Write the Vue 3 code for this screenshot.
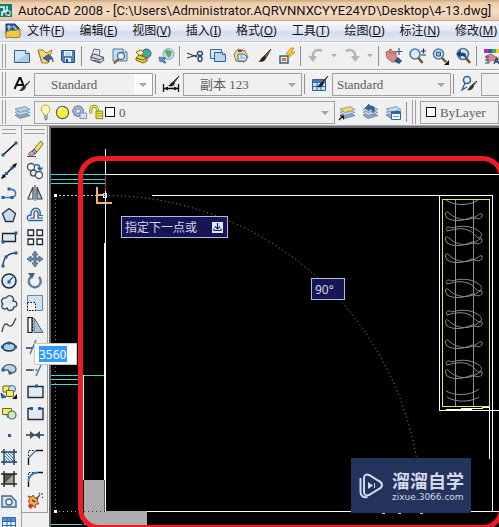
<script setup>
import { ref } from 'vue'

const menus = [
  ['文件', 'F'], ['编辑', 'E'], ['视图', 'V'], ['插入', 'I'], ['格式', 'O'],
  ['工具', 'T'], ['绘图', 'D'], ['标注', 'N'], ['修改', 'M'],
]

const distance = ref('3560')

const layers = (top) =>
  '<path d="M2 12l5 3.500 10-3-5-2z" fill="#8fa9c6" stroke="#58718f" stroke-width=".7"/>' +
  '<path d="M2 9l5 3.500 10-3-5-2z" fill="#c3d6e8" stroke="#6a86a8" stroke-width=".7"/>' +
  `<path d="M2 6l5 3.500 10-3-5-3z" fill="${top}" stroke="#5f83ad" stroke-width=".7"/>`
const brush = '<path d="M16 2l-7 7 2 2z" fill="#8a5a2c" stroke="#3a2a1c" stroke-width=".8"/><path d="M9.500 9c-3 0-3 4-6 5.500 4 1 7-.5 7.500-3.500z" fill="#222"/>'
const dot = (x, y) => `<rect x="${x - 1.5}" y="${y - 1.5}" width="3" height="3" fill="#1f5f9e"/>`

const standard = [
  { name: '新建', art: '<path d="M1.500 3.500h11l4 3v9h-15z" fill="#cfe4f6" stroke="#2d5f8e"/><path d="M12.500 3.500v3h4" fill="#fff" stroke="#2d5f8e"/><path d="M2 15L14 7h2v8z" fill="#a9cbe8"/>' },
  { name: '打开', art: '<path d="M2 3h5l3 3 6-3-4 13H6z" fill="#f4d98b" stroke="#a07a28"/><path d="M2 3l4 13" stroke="#a07a28"/><path d="M13 7l-6 4 6 4v-3h3l1 3c0-4-1-6-4-6z" fill="#49659c" stroke="#26375c" stroke-width=".6"/>' },
  { name: '保存', art: '<path d="M2.500 3.500h13v12h-11l-2-2z" fill="#4c86bd" stroke="#244f80"/><path d="M5 4h8v5H5z" fill="#e8f2fb"/><path d="M6 6h6M6 8h6" stroke="#8db2d3" stroke-width=".8"/><path d="M6 11h6v4H6z" fill="#dce8f2"/><path d="M7 12h2v3H7z" fill="#244f80"/>' },
  { sep: 1 },
  { name: '打印', art: '<path d="M6 2l6 1-1 6-7-1z" fill="#fff" stroke="#555b77"/><path d="M3 9l3-2 9 3 1 3-4 3-9-3z" fill="#d3d6e4" stroke="#4d5270"/><path d="M3 10l9 3 4-3M6 13l6 2" fill="none" stroke="#4d5270"/><path d="M7 4l3 .6M6.500 6l3 .5" stroke="#8b91b0" stroke-width=".7"/>' },
  { name: '打印预览', art: '<path d="M2 2h10l4 3v9H2z" fill="#c4dcf0" stroke="#557fa8"/><path d="M12 2v3h4" fill="#fff" stroke="#557fa8"/><circle cx="10" cy="9" r="3.500" fill="#e9f5fd" stroke="#456a92" stroke-width="1.300"/><path d="M7.500 12L3 16.500" stroke="#8b5a34" stroke-width="2.200"/>' },
  { name: '发布', art: '<circle cx="12.500" cy="6.500" r="4.500" fill="#3f9fd6" stroke="#1f5f95"/><path d="M10 3c2 2 4 1 5 5l-2 3c0-3-3-3-3-8z" fill="#56b05c"/><path d="M2 5l5-2 3 3-4 3z" fill="#fff6a0" stroke="#8a7415"/><path d="M2 11l3-3 8 3v3l-4 2-7-3z" fill="#e8d33a" stroke="#735f10"/><path d="M2 11l7 2 4-2" fill="none" stroke="#735f10"/>' },
  { name: '三维 DWF', art: '<circle cx="11.500" cy="7" r="5.500" fill="#bfdce9" stroke="#83a3b6"/><path d="M8 4c3-3 4 0 7 0-1 4-1 6-4 7 0-3-3-3-3-7z" fill="#5daa63"/><path d="M2 10l7 1-2 2 2 3H7l-2-2-2 1z" fill="#5c8fc2" stroke="#315d8e" stroke-width=".7"/>' },
  { sep: 1 },
  { name: '剪切', art: '<path d="M1 6l10 4M1 11l10-3" stroke="#2d3c50" stroke-width="1.300"/><ellipse cx="14" cy="6.500" rx="2.500" ry="2" fill="none" stroke="#2b4a78" stroke-width="1.400"/><ellipse cx="14" cy="12" rx="2" ry="2.500" fill="none" stroke="#2b4a78" stroke-width="1.400"/>' },
  { name: '复制', art: '<path d="M1.500 2.500h11v9h-11z" fill="#d6e8f6" stroke="#3a6a98"/><path d="M5.500 5.500h8l3 2v7h-11z" fill="#b9d8f0" stroke="#2d5f8e"/><path d="M13.500 5.500v2h3" fill="#fff" stroke="#2d5f8e"/>' },
  { name: '粘贴', art: '<path d="M6 2L2 7l2 7 8 1 4-5-3-6z" fill="#f1d891" stroke="#9b7a33"/><path d="M6 4h4" stroke="#555" stroke-width="2"/><path d="M6 7h6l3 3-1 4H6z" fill="#d7e9f6" stroke="#3f6d9a"/><path d="M8 9h3M8 11h5" stroke="#7197bb" stroke-width=".8"/>' },
  { name: '特性匹配', art: brush },
  { name: '块编辑器', art: '<path d="M2 9h8v7H2z" fill="#f1e4cb" stroke="#315f94" stroke-width="1.500"/><path d="M4 11h4v3H4z" fill="#e57a2c"/><path d="M13 1L8 7h4l-3 5 8-7h-4l3-4z" fill="#ffd52e" stroke="#bb8510" stroke-width=".8"/>' },
  { sep: 1 },
  { name: '放弃', art: '<path d="M15 4c-6-3-10 1-9 7" fill="none" stroke="#b5b5b5" stroke-width="2.500"/><path d="M1 9h9l-4 6z" fill="#b5b5b5"/>' },
  { name: '放弃列表', narrow: 1, art: '<path d="M6 7h6l-3 3.500z" fill="#b0b0b0"/>' },
  { name: '重做', art: '<path d="M3 4c6-3 10 1 9 7" fill="none" stroke="#b5b5b5" stroke-width="2.500"/><path d="M8 9h9l-5 6z" fill="#b5b5b5"/>' },
  { name: '重做列表', narrow: 1, art: '<path d="M6 7h6l-3 3.500z" fill="#b0b0b0"/>' },
  { sep: 1 },
  { name: '实时平移', art: '<path d="M1 5l2-1 3 3-2-4 2-1 3 5V4l2 1v5l2 1-2 4-4 0-5-4z" fill="#dc8c84" stroke="#93504c" stroke-width=".8"/><path d="M9 14l4-4 4 4-3 3z" fill="#34517f"/><path d="M14 1v7M10.500 4.500h7" stroke="#3b5d8d" stroke-width="1.200"/>' },
  { name: '实时缩放', art: '<circle cx="7" cy="7" r="5" fill="#d8ecfa" stroke="#4d78a8" stroke-width="1.600"/><path d="M10.500 11l4 5" stroke="#7b4e2d" stroke-width="2.600"/><path d="M13 4h5M15.500 1.500v5M13 8h5" stroke="#1d3356" stroke-width="1.200"/>' },
  { name: '窗口缩放', art: '<circle cx="7.500" cy="7" r="5" fill="#d8ecfa" stroke="#4d78a8" stroke-width="1.600"/><path d="M5.500 5h4v4h-4z" fill="#8eb7dc" stroke="#244f80"/><path d="M11 11l4 4" stroke="#7b4e2d" stroke-width="2.400"/><path d="M18 13v5h-5z" fill="#111"/>' },
  { name: '缩放上一个', art: '<circle cx="9" cy="7" r="5.500" fill="#cde2f4" stroke="#4d78a8" stroke-width="1.600"/><path d="M2 7l5-4v3c5-1 6 2 5 6-1-3-3-3-5-3v2z" fill="#1f4679"/><path d="M12 11l4 5" stroke="#7b4e2d" stroke-width="2.600"/>' },
  { sep: 1 },
  { name: '特性', art: '<path d="M1 2h4v4H1z" fill="#b331b5"/><path d="M5 2h4v4H5z" fill="#3552c5"/><path d="M9 2h4v4H9z" fill="#35b058"/><path d="M13 2h4v4h-4z" fill="#e8ce2e"/><path d="M3 9l5-2 8 5-3 3-4-2-4 3z" fill="#dc8c84" stroke="#93504c" stroke-width=".8"/><path d="M2 10h4M2 13h4M2 16h4" stroke="#28477a"/><path d="M11 17l2.500-6 2.500 6M12 15h3" stroke="#28477a" fill="none" stroke-width="1.300"/>' },
]

const styleBars = [
  { name: '文字样式', value: 'Standard', kind: 'indent lit', art: '<path d="M1.500 14L6.500 3h1l4 10M4 10h6" fill="none" stroke="#111" stroke-width="2"/><path d="M17 6l-6 5 1 1z" fill="#8a5a2c" stroke="#5a3a1c"/><path d="M11 11c-2 0-3 4-5 5 4 .5 6-1 7-4z" fill="#333"/>' },
  { name: '标注样式', value: '副本 123', kind: 'indent', art: '<path d="M1.500 9v8M16.500 9v8M2 13.500h14" stroke="#111" stroke-width="1.300"/><path d="M2 13.500l4-2v4zM16 13.500l-4-2v4z" fill="#111"/><path d="M17 1l-6 6 1 1z" fill="#8a5a2c" stroke="#4a3018"/><path d="M11 7c-2 0-3 3-5 4 4 1 6 0 7-3z" fill="#222"/>' },
  { name: '表格样式', value: 'Standard', kind: '', art: '<path d="M1.500 4.500h13v11h-13z" fill="#cfe2f6" stroke="#2b5fa8"/><path d="M2 5h12v3H2z" fill="#3f76c2"/><path d="M2 11.500h12M6 8v8M10 8v8" stroke="#2b5fa8"/><path d="M17 1l-6 6 1 1z" fill="#8a5a2c" stroke="#4a3018"/><path d="M11 7c-2 0-3 4-5 5 4 1 6-1 7-4z" fill="#222"/>' },
  { name: '多重引线样式', value: '', kind: '', art: '<circle cx="7" cy="5" r="3.500" fill="#e5f2fb" stroke="#2b5f9e" stroke-width="1.500"/><path d="M5 8l-3 7 5-3" fill="none" stroke="#2b5f9e" stroke-width="1.300"/><path d="M17 6l-5 4 1 1z" fill="#8a5a2c" stroke="#4a3018"/><path d="M12 10c-2 0-3 4-5 5 4 1 6-1 7-4z" fill="#333"/>' },
]

const layerState = [
  '<path d="M7 12c0-3-3-3-3-7a5 5 0 0 1 10 0c0 4-3 4-3 7z" transform="translate(1 1) scale(.9)" fill="#fffbb0" stroke="#a89a2c"/><path d="M7.500 13h4M7.500 15h4M8.500 16.500h2" stroke="#6f7480" stroke-width="1.200"/>',
  '<circle cx="9" cy="9" r="6.500" fill="#ffec35" stroke="#4c5c62" stroke-width="1.200"/><path d="M5 7a5 5 0 0 1 5-3" stroke="#fffbc0" stroke-width="2" fill="none"/>',
  '<circle cx="7.500" cy="7.500" r="5.500" fill="#a9bdd3" stroke="#6685a8" stroke-width="1.300"/><circle cx="7.500" cy="7.500" r="2.500" fill="#dce8f2" stroke="#6685a8"/><path d="M9.500 9.500h7v6h-7z" fill="#d7e0ec" stroke="#7c91ae"/>',
  '<path d="M3 10V6a3.500 3.500 0 0 1 7 0v5" fill="none" stroke="#8a8c22" stroke-width="3.200"/><path d="M3 9.500V6a3.500 3.500 0 0 1 7 0v5" fill="none" stroke="#f1ee52" stroke-width="1.500"/><path d="M8.500 7.500h7v8h-7z" fill="#eee740" stroke="#85831c"/><path d="M9 10h6M9 12.500h6" stroke="#a9a428"/>',
]

const layerTools = [
  { name: '置为当前', art: layers('#f4df4a') + '<path d="M1 17l4-4M2 13h3.500v3.500" stroke="#111" fill="none" stroke-width="1.200"/>' },
  { name: '上一个图层', art: layers('#c3d9ee') + '<path d="M4 5l4-4v2c5-1 7 3 4 7 0-3-2-4-4-4v2z" fill="#34659e" stroke="#1f4679" stroke-width=".6"/>' },
  { name: '图层状态', art: layers('#c3d9ee') + '<path d="M7.500 8.500h9v8h-9z" fill="#f4f9fe" stroke="#2c64a4"/><path d="M7 8h10v3H7z" fill="#2c64a4"/><path d="M9 13.500h6" stroke="#6ea0d0"/>' },
]

const draw = [
  { name: '直线', art: `<path d="M3 15L16 3" stroke="#111" stroke-width="1.500"/>${dot(3, 15)}${dot(16, 3)}` },
  { name: '构造线', art: `<path d="M2 16L16 2" stroke="#111" stroke-width="1.400"/><path d="M1 17l2-5 3 3zM17 1l-5 2 3 3z" fill="#111"/>${dot(6.5, 11.5)}${dot(12, 6)}` },
  { name: '多段线', art: `<path d="M3 13.500h9c6-1 4-9-2-8" fill="none" stroke="#3a76b4" stroke-width="1.600"/>${dot(3, 13.5)}${dot(12, 13.5)}${dot(9, 5)}` },
  { name: '正多边形', art: '<path d="M9 2.500l6.500 5-2.500 8H5.500l-3-8z" fill="#c8dced" stroke="#26323f" stroke-width="1.300"/>' },
  { name: '矩形', art: `<path d="M2.500 5.500h13v8h-13z" fill="#d7e9f7" stroke="#222" stroke-width="1.300"/>${dot(16, 5)}${dot(3, 14)}` },
  { name: '圆弧', art: `<path d="M3 16C3 8 8 3 16 3" fill="none" stroke="#223e5c" stroke-width="1.400"/>${dot(3, 16)}${dot(6, 7)}${dot(16, 3)}` },
  { name: '圆', art: `<circle cx="9" cy="9" r="7" fill="#d9eaf7" stroke="#1d2a38" stroke-width="1.500"/><path d="M9 9l4-4" stroke="#1f5f9e" stroke-width="1.300"/>${dot(9, 10)}` },
  { name: '修订云线', art: '<path d="M6 4c3-5 9-1 7 3 5 0 5 6 1 6-1 4-6 5-7 1-4 3-7-2-4-4-3-2-1-7 3-6z" fill="#e2ebf2" stroke="#3c4651" stroke-width="1.300"/>' },
  { name: '样条曲线', art: '<path d="M2 16c1-6 3-10 6-7s5 0 8-7" fill="none" stroke="#3c4651" stroke-width="1.300"/>' },
  { name: '椭圆', art: `<ellipse cx="9" cy="9" rx="6.500" ry="4" fill="#a9d1ec" stroke="#222e3c" stroke-width="1.300"/>${dot(2.5, 9)}${dot(15.5, 9)}${dot(9, 5)}` },
  { name: '椭圆弧', art: `<path d="M3 10c-1-7 13-7 13-1 0 3-3 4-6 4l-2-3z" fill="#b8d8ee" stroke="#53616e" stroke-width="1.400"/>${dot(3, 10)}${dot(10, 13)}` },
  { name: '插入块', art: '<path d="M3 4h8v6H3z" fill="#f4ed65" stroke="#6a6817"/><circle cx="12" cy="7" r="3.500" fill="#cbe0f0" stroke="#3b6d9b"/><path d="M6.500 8.500h7v6h-7z" fill="#f4ed65" stroke="#6a6817"/><path d="M1 11l5 4-4 1z" fill="#2f73b3" stroke="#1c4a77"/><path d="M17 12v5h-5z" fill="#111"/>' },
  { name: '创建块', art: '<path d="M2.500 4.500h9v6h-9z" fill="#f4ed65" stroke="#6a6817"/><circle cx="12" cy="11" r="4" fill="#d4e8a0" stroke="#3b6d9b" stroke-width="1.200"/><path d="M6 10l2 4" stroke="#2f73b3"/>' },
  { name: '点', art: dot(9.5, 9.5) },
  { name: '图案填充', art: '<path d="M4.500 4.500h9v9h-9z" fill="#e2eff8"/><path d="M5 8l5 5M5 5l8 8M8 5l5 5M11 5l2 2M5 11l2 2" stroke="#2f73b3"/><path d="M1 4h16M1 14h16M4 1v16M14 1v16" stroke="#1d3d5f" stroke-width="1.400"/>' },
  { name: '渐变色', art: '<path d="M4 4h10v10H4z" fill="#55594d"/><path d="M14 4v10H4z" fill="#a6a790"/><path d="M1 4h16M1 14h16M4 1v16M14 1v16" stroke="#20262c" stroke-width="1.400"/>' },
  { name: '面域', art: '<path d="M2 4h9l5 5v6H2z" fill="#cfe4f5" stroke="#42678b" stroke-width="1.400"/><circle cx="9" cy="10" r="3" fill="#fff" stroke="#42678b" stroke-width="1.400"/>' },
  { name: '表格', art: '<path d="M2.500 3.500h13v12h-13z" fill="#eaf4fd" stroke="#3267b8"/><path d="M3 4h12v3H3z" fill="#5a8ed8"/><path d="M3 7.500h12M3 11.500h12M7 4v11M11 4v11" stroke="#3267b8"/>' },
]

const modify = [
  { name: '删除', art: '<path d="M15 1L8 9l3 3 6-8z" fill="#f3df5c" stroke="#7a6a20"/><path d="M8 9l-2 2 3 3 2-2z" fill="#98aac0" stroke="#44566e"/><path d="M6 11l-3 2c-1 3 2 4 4 2l2-1z" fill="#e3a29a" stroke="#8b5850"/><path d="M1 16.500h9" stroke="#555"/>' },
  { name: '复制对象', art: '<circle cx="5" cy="5" r="3.500" fill="#fff" stroke="#41505f" stroke-width="1.300"/><circle cx="7.500" cy="11" r="3" fill="#e5eef6" stroke="#41505f" stroke-width="1.300"/><circle cx="13" cy="13" r="3.500" fill="#fff" stroke="#41505f" stroke-width="1.300"/><path d="M9 3c3-1 5 0 5 4M11.500 5.500L14 8l2.500-2.500" fill="none" stroke="#2463a1" stroke-width="1.500"/>' },
  { name: '镜像', art: '<path d="M7 3v12H2z" fill="#fff" stroke="#334150" stroke-width="1.200"/><path d="M11 3v12h5z" fill="#abc5da" stroke="#334150" stroke-width="1.200"/><path d="M9 1v16" stroke="#334150"/>' },
  { name: '偏移', art: '<path d="M2 14.500h14M2 14c-2-4 1-5 3-5-1-9 11-9 9 0" fill="none" stroke="#2469aa" stroke-width="1.400"/><path d="M4 12h4V7c0-3 4-3 4 0v5h5" fill="none" stroke="#39495a" stroke-width="1.200"/><path d="M17 9.500h-4M17 14.500h-4" stroke="#2469aa" stroke-width="1.200"/>' },
  { name: '阵列', art: '<g fill="#fff" stroke="#202830" stroke-width="1.300"><path d="M2 2h5.500v5.500H2zM11 2h5.500v5.500H11zM2 11h5.500v5.500H2zM11 11h5.500v5.500H11z"/></g>' },
  { name: '移动', art: '<path d="M9 1l3 4h-2v3h3V6l4 3-4 3v-2h-3v3h2l-3 4-3-4h2v-3H5v2L1 9l4-3v2h3V5H6z" fill="#6a8cad" stroke="#35536f" stroke-width=".7"/>' },
  { name: '旋转', art: '<path d="M6 4a6 6 0 1 0 7 1" fill="none" stroke="#607f9e" stroke-width="2.500"/><path d="M2 1h7L6 7z" fill="#426381"/>' },
  { name: '缩放', art: '<path d="M1.500 1.500h15v15h-15z" fill="#cfe2f1" stroke="#6984a0"/><path d="M1.500 8.500h8v8h-8z" fill="#f7fafc" stroke="#111" stroke-dasharray="1.500 1.500"/>' },
  { name: '拉伸', art: '<path d="M2 1.500h4v15H2z" fill="#fff" stroke="#111" stroke-width="1.200"/><path d="M6.500 1.500v15" stroke="#111" stroke-dasharray="1.500 1.500"/><path d="M8 2l9 14.500H8z" fill="#a8c3db" stroke="#4b6785"/>' },
  { name: '修剪', art: '<path d="M0 10h7" stroke="#111" stroke-width="1.300"/><path d="M4 16L10 2" stroke="#3a78b7" stroke-width="1.400"/><path d="M10 10h6" stroke="#111" stroke-dasharray="2 2"/>' },
  { name: '延伸', art: '<path d="M0 10h6" stroke="#111" stroke-width="1.300"/><path d="M6 10h7" stroke="#111" stroke-dasharray="2 1.500"/><path d="M10 16L16 3" stroke="#3a78b7" stroke-width="1.400"/>' },
  { name: '打断于点', art: `<path d="M2 4.500h15v11H2z" fill="#e0e9f4" stroke="#222c38" stroke-width="1.400"/>${dot(10.5, 4)}` },
  { name: '打断', art: `<path d="M5 4.500H2v11h15v-11h-3" fill="#e0e9f4" stroke="#222c38" stroke-width="1.400"/>${dot(5.5, 4.5)}${dot(13.5, 4.5)}` },
  { name: '合并', art: '<path d="M0 9h18" stroke="#1f2830" stroke-width="1.400"/><path d="M4 5l5 4-5 4zM14 5L9 9l5 4z" fill="#3d5263"/>' },
  { name: '倒角', art: '<path d="M2.500 8V2.500H9" fill="none" stroke="#111" stroke-dasharray="1.500 1.500"/><path d="M2.500 17V10M10 2.500h7" stroke="#111" stroke-width="1.400"/><path d="M2.500 10L10 2.500" stroke="#3a78b7" stroke-width="1.500"/>' },
  { name: '圆角', art: '<path d="M2.500 8V2.500H9" fill="none" stroke="#111" stroke-dasharray="1.500 1.500"/><path d="M2.500 17v-5M12 2.500h5" stroke="#111" stroke-width="1.400"/><path d="M2.500 12q0-9 9.500-9.500" fill="none" stroke="#3a78b7" stroke-width="1.800"/>' },
  { name: '分解', art: '<path d="M2 4l4 1 1-2 2 3 3 0-1 3 2 3-3 0-1 4-2-3-4 2 1-4-2-2 2-2z" fill="#f4b04a" stroke="#b3401e"/><path d="M2 13l4-1 1 3-3 2z" fill="#cf3030"/><path d="M10 7l4-4M13 1l1 1M16 1v2M16 5l1 1" stroke="#44536c" stroke-width="1.300"/><path d="M6 8l3 2" stroke="#2f2f2f" stroke-width="1.500"/>' },
]

const cupCoils = [218, 243, 260, 295, 326, 346, 376]
const humpCoils = [231, 284, 315, 365]
</script>

<template>
  <div class="app">
    <header class="title-bar">
      <svg class="app-logo" width="13" height="14" viewBox="0 0 13 14">
        <path d="M0 0h12v13H0z" fill="#157a72" />
        <path d="M0 3h4v4h3V2M2 12V8h3M9 7v5" fill="none" stroke="#e7fffb" stroke-width="1.500" />
        <path d="M6 7h4v4H6z" fill="#124c52" stroke="#fff" />
      </svg>
      <span>AutoCAD 2008 - [C:\Users\Administrator.AQRVNNXCYYE24YD\Desktop\4-13.dwg]</span>
    </header>

    <nav class="menu-bar">
      <svg class="doc-logo" width="16" height="16" viewBox="0 0 16 16">
        <path d="M1 1h9l4 4v6H1z" fill="#2d5c93" stroke="#1c3c66" />
        <path d="M4 2v5M2 4h5M8 3l4 4" stroke="#c9e3fa" stroke-width="1.200" />
        <path d="M1 9c5-3 7 0 14-3v8c-6 2-9-1-14 1z" fill="#f2c844" stroke="#a57d19" />
      </svg>
      <button v-for="[label, key] in menus" :key="key" class="menu-item">{{ label }}(<u>{{ key }}</u>)</button>
    </nav>

    <div class="toolbar standard">
      <i class="grip"></i>
      <template v-for="(t, i) in standard" :key="i">
        <i v-if="t.sep" class="sep"></i>
        <button v-else class="tool" :class="{ narrow: t.narrow }" :aria-label="t.name">
          <svg width="18" height="18" viewBox="0 0 18 18" fill="none" v-html="t.art"></svg>
        </button>
      </template>
    </div>

    <div class="toolbar">
      <i class="grip"></i>
      <template v-for="(s, i) in styleBars" :key="i">
        <i v-if="i" class="sep"></i>
        <button class="tool wide" :aria-label="s.name">
          <svg width="18" height="18" viewBox="0 0 18 18" fill="none" v-html="s.art"></svg>
        </button>
        <div class="combo style-combo" :class="s.kind">
          <select :aria-label="s.name"><option>{{ s.value }}</option></select>
          <svg class="arrow" width="18" height="20" viewBox="0 0 18 20"><path d="M5 9h8l-4 4z" fill="#a3a3a3" /></svg>
        </div>
      </template>
    </div>

    <div class="toolbar">
      <i class="grip"></i>
      <button class="tool wide" aria-label="图层特性管理器">
        <svg width="18" height="18" viewBox="0 0 18 18" v-html="layers('#b5cfe8')"></svg>
      </button>
      <div class="combo layer-combo">
        <svg v-for="(a, i) in layerState" :key="i" width="17" height="17" viewBox="0 0 18 18" fill="none" v-html="a"></svg>
        <b class="swatch"></b>
        <select aria-label="图层"><option>0</option></select>
        <svg class="arrow" width="18" height="20" viewBox="0 0 18 20"><path d="M5 9h8l-4 4z" fill="#a3a3a3" /></svg>
      </div>
      <button v-for="t in layerTools" :key="t.name" class="tool" :aria-label="t.name">
        <svg width="18" height="18" viewBox="0 0 18 18" fill="none" v-html="t.art"></svg>
      </button>
      <i class="sep"></i>
      <i class="grip"></i>
      <div class="combo color-combo">
        <b class="swatch"></b>
        <select aria-label="颜色"><option>ByLayer</option></select>
      </div>
    </div>

    <main class="workspace">
      <aside class="palette draw">
        <i class="grip-h"></i>
        <button v-for="t in draw" :key="t.name" :aria-label="t.name">
          <svg width="18" height="18" viewBox="0 0 18 18" fill="none" v-html="t.art"></svg>
        </button>
      </aside>
      <aside class="palette modify">
        <i class="grip-h"></i>
        <button v-for="t in modify" :key="t.name" :aria-label="t.name">
          <svg width="18" height="18" viewBox="0 0 18 18" fill="none" v-html="t.art"></svg>
        </button>
      </aside>

      <section class="canvas">
        <svg class="drawing" fill="none">
          <g transform="translate(-51 -128)" shape-rendering="crispEdges">
            <path d="M51 174.500H105M51 179.500H105M51 183.500H105M51 375.500H105M51 379.500H79M51 384.500H79M51 524.500H82" stroke="#4fd0cc" />
            <path d="M83.500 375V480M105.500 149V511M105 174.500H499M152 195.500H493M105 511.500H499" stroke="#fff" />
            <path d="M105 243V511" stroke="#fff" stroke-width="2" />
            <path d="M105.500 175V191" stroke="#b8322a" />
            <path d="M84 480h21v31h42v14H84z" fill="#adadad" />
            <path d="M104.500 480V511" stroke="#555" />
            <path d="M84 511.500H105" stroke="#333" stroke-dasharray="1 3" />
            <path d="M55.500 195V511" stroke="#858585" stroke-dasharray="1 3" />
            <path d="M55 195.500H105" stroke="#c8d8c8" stroke-dasharray="2 2" />
            <path d="M55 511.500H83" stroke="#aaa" stroke-dasharray="1 3" />
            <path d="M54 194h3v3h-3zM54 510h3v3h-3z" fill="#fff" />
            <path d="M97 187v16h15M97 195h6" stroke="#eeb27c" stroke-width="2" />
            <path d="M103.500 193.500h3v4h-3z" stroke="#dfe7dc" />
            <path d="M439.500 195V410.500H499M492.500 195V511M489.500 406V459" stroke="#fff" />
            <path d="M442.500 199.500H489.500V406.500H442.500z" stroke="#e6ea4e" />
            <path d="M455.500 200V406M473.500 200V406" stroke="#7fa06a" />
            <path d="M446 409.500H472M461 408.500H483M482 407.500H490" stroke="#fff" />
            <path d="M382 513.500h3M398 513.500h3M420 513.500h3" stroke="#ccc" />
          </g>
          <g transform="translate(-51 -128)">
            <path d="M105 195.500A316 316 0 0 1 421 511" stroke="#a5a5a5" stroke-dasharray="1 3" />
            <g stroke="#8c8c94">
              <path d="M446 200c8 6 24 6 32 0" />
              <path
                v-for="y in cupCoils" :key="'u' + y"
                :transform="`translate(0 ${y})`"
                d="M447 0c-3-5-1-8 2-5 7 7 18 9 28 3 3-3 6-3 5 0-1 4-6 3-10 1-9 4-18 5-25 1z"
              />
              <path
                v-for="y in humpCoils" :key="'h' + y"
                :transform="`translate(0 ${y})`"
                d="M447 0c-2-4 1-5 5-3 9-3 19-2 25 2 4 2 6 5 3 8-4 0-6-5-10-7-8-4-14-2-23 0z"
              />
              <path d="M446 391c9 5 24 5 33-2M447 397c9 6 24 5 32 0" />
            </g>
            <rect x="80.500" y="158.500" width="421" height="369" rx="19" stroke="#ed1c24" stroke-width="5" />
          </g>
        </svg>

        <label class="distance"><input v-model="distance" aria-label="距离" /></label>
        <div class="tip prompt">
          <span>指定下一点或</span>
          <svg width="11" height="11" viewBox="0 0 11 11"><path d="M0 0h11v11H0z" fill="#dfe8ff" /><path d="M5.500 1v5M3 4.500L5.500 7 8 4.500M2 6.500v2h7v-2" fill="none" stroke="#12226e" stroke-width="1.200" /></svg>
        </div>
        <div class="tip angle">90°</div>
        <div class="watermark">
          <svg width="24" height="26" viewBox="0 0 24 26" fill="none" stroke="#d3d9e8" stroke-width="2">
            <path d="M5 5c0-3 2-4 5-3l10 6c4 2 4 6 0 8l-10 6c-3 1-5 0-5-3z" />
            <path d="M1.500 5v14c0 4 3 6 7 5" />
            <path d="M9 9l5 3.500L9 16z" fill="#d3d9e8" stroke="none" />
            <path d="M15.500 10v5" stroke-width="1" />
          </svg>
          <div class="brand">
            <strong>溜溜自学</strong>
            <small>zixue.3066.com</small>
          </div>
        </div>
      </section>
    </main>
  </div>
</template>

<style>
body {
  margin: 0;
  overflow: hidden;
}
</style>

<style scoped>
.app {
  display: flex;
  flex-direction: column;
  height: 100vh;
  overflow: hidden;
  background: #f0f0f0;
  color: #111;
  font-family: "Noto Sans", "Noto Sans CJK SC", sans-serif;
  font-size: 12px;
}
button {
  flex: none;
  padding: 0;
  border: 0;
  background: none;
  color: inherit;
  font: inherit;
}
svg {
  display: block;
  flex: none;
}
.title-bar {
  display: flex;
  flex: none;
  align-items: center;
  gap: 5px;
  height: 21px;
  background: linear-gradient(#c9a988 0, #f0cba8 3px, #f5dcc4 12px, #e8c6a4 20px, #a8937e);
  font-family: Roboto, sans-serif;
  font-size: 13px;
  white-space: nowrap;
}
.menu-bar {
  display: flex;
  flex: none;
  align-items: center;
  gap: 15px;
  height: 20px;
  padding-left: 5px;
  border-bottom: 1px solid #c3c8d6;
  background: linear-gradient(#f7f8fd, #e3e7f5 50%, #d5dbee 55%, #e4e8f6);
  white-space: nowrap;
}
.doc-logo {
  margin-right: -9px;
}
.menu-item {
  line-height: 18px;
}
.toolbar {
  display: flex;
  flex: none;
  align-items: center;
  box-sizing: border-box;
  height: 28px;
  overflow: hidden;
  border-top: 1px solid #fff;
  border-bottom: 1px solid #a8a8a8;
}
.grip {
  flex: none;
  box-sizing: border-box;
  width: 4px;
  height: 24px;
  margin: 0 4px 0 2px;
  border: solid #a0a0a0;
  border-width: 0 1px;
}
.sep {
  flex: none;
  width: 1px;
  height: 20px;
  margin: 0 3px 0 2px;
  background: #8f8f8f;
}
.tool {
  display: flex;
  align-items: center;
  justify-content: center;
  width: 23px;
  height: 24px;
}
.wide {
  width: 24px;
}
.narrow {
  width: 13px;
}
.combo {
  display: flex;
  flex: none;
  align-items: center;
  box-sizing: border-box;
  height: 23px;
  border: 1px solid #a0a0a0;
  background: #f0f0f0;
}
.combo select {
  flex: 1;
  min-width: 0;
  height: 20px;
  padding: 0 0 0 4px;
  border: 0;
  appearance: none;
  background: none;
  color: #5c5c5c;
  font: 13px "Liberation Serif", "Noto Sans CJK SC", serif;
}
.style-combo {
  width: 119px;
}
.indent select {
  padding-left: 16px;
}
.lit .arrow {
  background: #fbfbfb;
}
.layer-combo {
  flex: 1;
  min-width: 120px;
  padding-left: 2px;
}
.swatch {
  flex: none;
  box-sizing: border-box;
  width: 10px;
  height: 10px;
  border: 1px solid #111;
  background: #fff;
}
.color-combo {
  width: 79px;
  padding-left: 5px;
}
.workspace {
  display: flex;
  flex: 1;
  min-height: 0;
}
.palette {
  display: flex;
  flex: none;
  flex-direction: column;
  box-sizing: border-box;
  align-self: flex-start;
  padding-top: 3px;
  border-right: 1px solid #a0a0a0;
}
.palette button {
  display: flex;
  align-items: center;
  justify-content: center;
  height: 22px;
}
.draw {
  width: 22px;
  padding-right: 3px;
}
.modify {
  width: 26px;
  border-bottom: 1px solid #a0a0a0;
}
.grip-h {
  flex: none;
  height: 3px;
  margin: 0 2px 4px;
  border: solid #a0a0a0;
  border-width: 1px 0;
}
.canvas {
  position: relative;
  flex: 1;
  min-width: 0;
  margin-left: 1px;
  border: solid #6a6a6e;
  border-width: 2px 0 0 2px;
  background: #000;
}
.drawing {
  width: 100%;
  height: 100%;
}
.distance {
  position: absolute;
  top: 215px;
  left: -17px;
  box-sizing: border-box;
  width: 43px;
  height: 22px;
  padding: 2px 4px;
  border: 1px solid #c8c8c8;
  background: #fff;
}
.distance input {
  display: block;
  width: 28px;
  height: 16px;
  padding: 0;
  border: 0;
  background: #3399ff;
  color: #fff;
  font: 12px "Noto Sans", sans-serif;
}
.tip {
  position: absolute;
  display: flex;
  align-items: center;
  justify-content: space-between;
  box-sizing: border-box;
  height: 22px;
  padding: 0 4px 0 3px;
  border: 1px solid #b9b9dc;
  background: #161657;
  color: #d5d5ea;
  white-space: nowrap;
}
.prompt {
  top: 88px;
  left: 70px;
  width: 107px;
}
.angle {
  top: 150px;
  left: 260px;
  width: 34px;
}
.watermark {
  position: absolute;
  top: 330px;
  left: 300px;
  display: flex;
  align-items: center;
  gap: 9px;
  box-sizing: border-box;
  width: 120px;
  height: 55px;
  padding-left: 8px;
  background: #24335c;
  color: #d3d9e8;
}
.brand {
  display: flex;
  flex-direction: column;
}
.brand strong {
  font: 700 18px/24px "Noto Sans CJK SC", sans-serif;
}
.brand small {
  font: 9px/11px "DejaVu Sans", sans-serif;
}
</style>
